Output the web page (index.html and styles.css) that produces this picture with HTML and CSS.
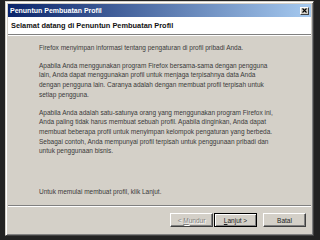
FILE: index.html
```html
<!DOCTYPE html>
<html lang="id">
<head>
  <meta charset="UTF-8">
  <title>Penuntun Pembuatan Profil</title>
  <link rel="stylesheet" href="styles.css">
</head>
<body>

  <div class="window">
    <div class="titlebar">
      <span class="title">Penuntun Pembuatan Profil</span>
      <span class="close-btn">
        <svg width="5" height="5" viewBox="0 0 5 5"><path d="M0.5 0.5L4.5 4.5M4.5 0.5L0.5 4.5" stroke="#000" stroke-width="1.1"/></svg>
      </span>
    </div>

    <div class="header">Selamat datang di Penuntun Pembuatan Profil</div>
    <div class="etched"></div>

    <div class="content">
      <p>Firefox menyimpan informasi tentang pengaturan di profil pribadi Anda.</p>
      <p>
        Apabila Anda menggunakan program Firefox bersama-sama dengan pengguna<br>
        lain, Anda dapat menggunakan profil untuk menjaga terpisahnya data Anda<br>
        dengan pengguna lain. Caranya adalah dengan membuat profil terpisah untuk<br>
        setiap pengguna.
      </p>
      <p>
        Apabila Anda adalah satu-satunya orang yang menggunakan program Firefox ini,<br>
        Anda paling tidak harus membuat sebuah profil. Apabila dinginkan, Anda dapat<br>
        membuat beberapa profil untuk menyimpan kelompok pengaturan yang berbeda.<br>
        Sebagai contoh, Anda mempunyai profil terpisah untuk penggunaan pribadi dan<br>
        untuk penggunaan bisnis.
      </p>
      <p class="note">Untuk memulai membuat profil, klik Lanjut.</p>
    </div>

    <div class="etched"></div>

    <div class="buttons">
      <button class="btn disabled">&lt; <u>M</u>undur</button>
      <button class="btn default"><u>L</u>anjut &gt;</button>
      <button class="btn cancel">Batal</button>
    </div>
  </div>

</body>
</html>
```

FILE: styles.css
```css
body {
  margin: 0;
  background: #222;
  font-family: 'Liberation Sans', Arial, sans-serif;
  font-size: 6.5px;
  color: #222;
  height: 240px;
  overflow: hidden;
}

.window {
  box-sizing: border-box;
  width: 309px;
  height: 235px;
  margin: 1px 0 0 5px;
  background: #d4d0c8;
  border-top: 1px solid #d4d0c8;
  border-left: 1px solid #d4d0c8;
  border-right: 1px solid #404040;
  border-bottom: 1px solid #404040;
  box-shadow: inset 1px 1px 0 #fff, inset -1px -1px 0 #808080;
  padding: 2px;
  display: flex;
  flex-direction: column;
}

.titlebar {
  height: 13px;
  background: linear-gradient(to right, #0a246a, #a6caf0);
  display: flex;
  align-items: center;
  justify-content: space-between;
  padding: 0 2px 0 2px;
}

.title {
  color: #fff;
  font-weight: bold;
  font-size: 7px;
}

.close-btn {
  box-sizing: border-box;
  width: 9px;
  height: 8px;
  background: #d4d0c8;
  border-top: 1px solid #fff;
  border-left: 1px solid #fff;
  border-right: 1px solid #404040;
  border-bottom: 1px solid #404040;
  display: flex;
  align-items: center;
  justify-content: center;
}

.close-btn svg {
  display: block;
}

.header {
  height: 17px;
  background: #fff;
  display: flex;
  align-items: center;
  padding-left: 3px;
  font-weight: bold;
  font-size: 7.4px;
  color: #111;
}

.etched {
  height: 1px;
  background: #808080;
  border-bottom: 1px solid #fff;
}

.content {
  flex: 1;
  display: flex;
  flex-direction: column;
  padding: 7px 10px 8px 31px;
  line-height: 9.7px;
  color: #3a3a3a;
}

.content p {
  margin: 0 0 8px;
  white-space: nowrap;
}

.content .note {
  margin-top: auto;
  margin-bottom: 0;
}

.buttons {
  display: flex;
  justify-content: flex-end;
  padding: 6px 5px 0 0;
  height: 20px;
}

.btn {
  box-sizing: border-box;
  width: 43px;
  height: 14px;
  padding: 0;
  font-family: 'Liberation Sans', Arial, sans-serif;
  font-size: 6.5px;
  color: #222;
  background: #d4d0c8;
  border-top: 1px solid #fff;
  border-left: 1px solid #fff;
  border-right: 1px solid #404040;
  border-bottom: 1px solid #404040;
  box-shadow: inset -1px -1px 0 #808080;
}

.btn.disabled {
  color: #808080;
  text-shadow: 1px 1px 0 #fff;
}

.btn.default {
  margin-left: 1px;
  border: 1px solid #000;
  box-shadow: inset 1px 1px 0 #fff, inset -1px -1px 0 #808080;
}

.btn.cancel {
  margin-left: 6px;
}
```
